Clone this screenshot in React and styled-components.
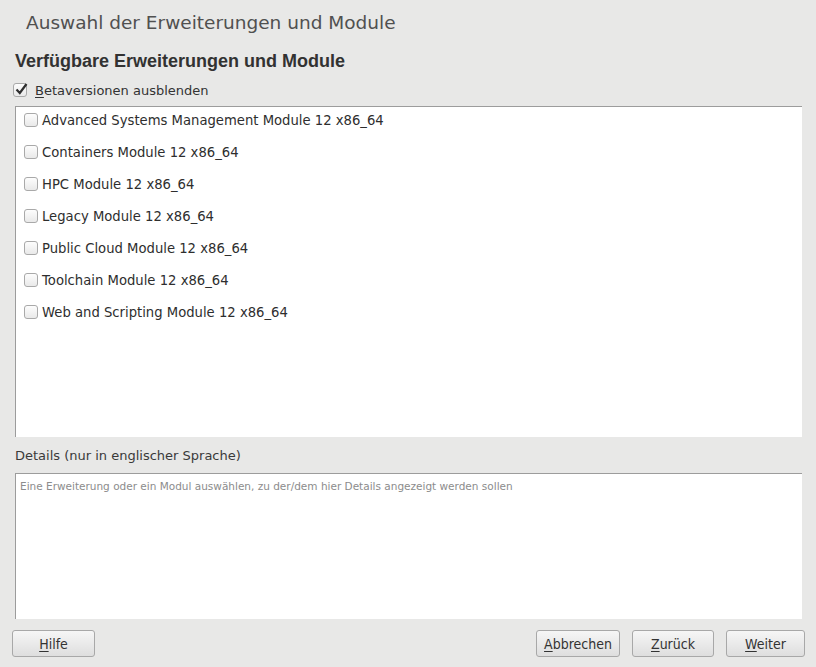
import React, { useState } from "react";
import styled, { createGlobalStyle } from "styled-components";

const GlobalStyle = createGlobalStyle`
  html, body {
    margin: 0;
    padding: 0;
    background: #e8e8e7;
  }
  body {
    font-family: "DejaVu Sans", sans-serif;
    color: #2e3436;
  }
`;

const Page = styled.div`
  width: 816px;
  height: 667px;
  display: flex;
  flex-direction: column;
  box-sizing: border-box;
  overflow: hidden;
`;

const Title = styled.h1`
  margin: 0;
  padding: 12px 0 0 26px;
  height: 41px;
  box-sizing: border-box;
  font-family: "DejaVu Sans", sans-serif;
  font-weight: normal;
  font-size: 18.5px;
  color: #505050;
`;

const Content = styled.div`
  display: flex;
  flex-direction: column;
  padding: 0 14px 0 15px;
`;

const Heading = styled.h2`
  margin: 0;
  height: 37px;
  padding-top: 10px;
  box-sizing: border-box;
  font-family: "Liberation Sans", Arial, sans-serif;
  font-weight: bold;
  font-size: 18px;
  color: #323232;
`;

const CheckRow = styled.label`
  display: flex;
  align-items: center;
  gap: 8px;
  height: 24px;
  margin-bottom: 4px;
  margin-left: ${(p) => p.indent || 0}px;
  font-size: 13px;
  color: #333;
  cursor: default;
`;

const Box = styled.span`
  position: relative;
  width: 14px;
  height: 14px;
  flex: none;
  box-sizing: border-box;
  border: 1px solid #a9a9a9;
  border-radius: 3px;
  background: linear-gradient(#fdfdfd, #e9e9e9);
`;

const Tick = styled.svg`
  position: absolute;
  left: 0;
  top: -3px;
`;

const Mnemonic = styled.span`
  text-decoration: underline;
  text-underline-offset: 2px;
`;

const ListFrame = styled.div`
  height: 331px;
  background: #fff;
  border-top: 1px solid #9c9c9c;
  border-left: 1px solid #9c9c9c;
  box-sizing: border-box;
  padding: 0 0 0 8px;
`;

const ListItem = styled.label`
  display: flex;
  align-items: center;
  gap: 4px;
  height: 26px;
  margin-bottom: 6px;
  font-size: 13.2px;
  color: #2e2e2e;
`;

const DetailsLabel = styled.div`
  height: 36px;
  display: flex;
  align-items: center;
  font-size: 13px;
  color: #3a3a3a;
`;

const DetailsFrame = styled.div`
  height: 146px;
  background: #fff;
  border-top: 1px solid #9c9c9c;
  border-left: 1px solid #9c9c9c;
  box-sizing: border-box;
  padding: 6px 4px;
  font-size: 10.5px;
  color: #8c8c8c;
`;

const ButtonBar = styled.div`
  display: flex;
  align-items: center;
  padding: 11px 11px 0 12px;
  gap: 12px;
`;

const Spacer = styled.div`
  flex: 1;
`;

const Button = styled.button`
  width: ${(p) => p.w}px;
  height: 27px;
  box-sizing: border-box;
  border: 1px solid #a8a8a8;
  border-radius: 3px;
  background: linear-gradient(#f6f6f6, #dedede);
  font-family: "DejaVu Sans", sans-serif;
  font-stretch: condensed;
  font-size: 14px;
  color: #333;
  padding: 0;
`;

const modules = [
  "Advanced Systems Management Module 12 x86_64",
  "Containers Module 12 x86_64",
  "HPC Module 12 x86_64",
  "Legacy Module 12 x86_64",
  "Public Cloud Module 12 x86_64",
  "Toolchain Module 12 x86_64",
  "Web and Scripting Module 12 x86_64",
];

function CheckBox({ checked }) {
  return (
    <Box>
      {checked && (
        <Tick width="15" height="15" viewBox="0 0 15 15">
          <path d="M2.5 8.5 L5.8 12 L12.5 3" fill="none" stroke="#2f2f2f" strokeWidth="2.2" />
        </Tick>
      )}
    </Box>
  );
}

export default function App() {
  const [hideBeta, setHideBeta] = useState(true);
  const [selected, setSelected] = useState({});

  return (
    <Page>
      <GlobalStyle />
      <Title>Auswahl der Erweiterungen und Module</Title>
      <Content>
        <Heading>Verfügbare Erweiterungen und Module</Heading>
        <CheckRow indent={-2} onClick={() => setHideBeta(!hideBeta)}>
          <CheckBox checked={hideBeta} />
          <span>
            <Mnemonic>B</Mnemonic>etaversionen ausblenden
          </span>
        </CheckRow>
        <ListFrame>
          {modules.map((m) => (
            <ListItem key={m} onClick={() => setSelected({ ...selected, [m]: !selected[m] })}>
              <CheckBox checked={!!selected[m]} />
              <span>{m}</span>
            </ListItem>
          ))}
        </ListFrame>
        <DetailsLabel>Details (nur in englischer Sprache)</DetailsLabel>
        <DetailsFrame>
          Eine Erweiterung oder ein Modul auswählen, zu der/dem hier Details angezeigt werden sollen
        </DetailsFrame>
      </Content>
      <ButtonBar>
        <Button w={83}>
          <Mnemonic>H</Mnemonic>ilfe
        </Button>
        <Spacer />
        <Button w={84}>
          <Mnemonic>A</Mnemonic>bbrechen
        </Button>
        <Button w={82}>
          <Mnemonic>Z</Mnemonic>urück
        </Button>
        <Button w={79}>
          <Mnemonic>W</Mnemonic>eiter
        </Button>
      </ButtonBar>
    </Page>
  );
}
